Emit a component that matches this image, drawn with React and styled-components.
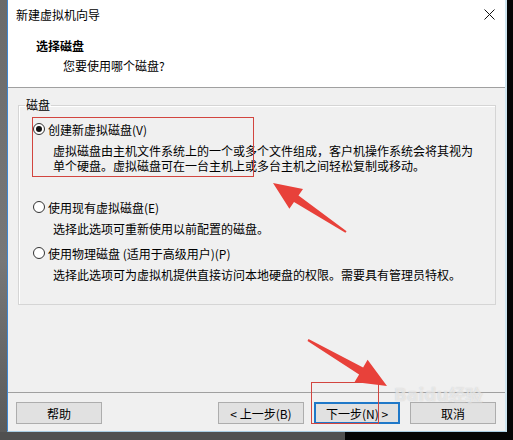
import React from "react";
import styled, { createGlobalStyle } from "styled-components";

const GlobalStyle = createGlobalStyle`
  html, body {
    margin: 0;
    padding: 0;
    overflow: hidden;
  }
  body {
    font-family: "Noto Sans CJK SC", "Noto Sans", sans-serif;
    font-size: 12px;
    color: #000;
  }
`;

const options = [
  {
    label: "创建新虚拟磁盘(V)",
    checked: true,
    desc: [
      "虚拟磁盘由主机文件系统上的一个或多个文件组成，客户机操作系统会将其视为",
      "单个硬盘。虚拟磁盘可在一台主机上或多台主机之间轻松复制或移动。",
    ],
    space: 27,
  },
  {
    label: "使用现有虚拟磁盘(E)",
    desc: ["选择此选项可重新使用以前配置的磁盘。"],
    space: 10,
  },
  {
    label: "使用物理磁盘 (适用于高级用户)(P)",
    desc: ["选择此选项可为虚拟机提供直接访问本地硬盘的权限。需要具有管理员特权。"],
    space: 0,
  },
];

function App() {
  return (
    <Screen>
      <GlobalStyle />
      <Row>
        <LeftEdge />
        <Window>
          <TitleBar>
            <span>新建虚拟机向导</span>
            <svg width="11" height="11" viewBox="0 0 11 11">
              <path d="M0.5 0.5 L10.5 10.5 M10.5 0.5 L0.5 10.5" stroke="#111" strokeWidth="1" />
            </svg>
          </TitleBar>
          <Header>
            <Heading>选择磁盘</Heading>
            <SubHeading>您要使用哪个磁盘?</SubHeading>
          </Header>
          <Body>
            <Group>
              <GroupLabel>磁盘</GroupLabel>
              <OptionList>
                {options.map((o) => (
                  <Option key={o.label} $space={o.space}>
                    <RadioRow>
                      <Radio $checked={o.checked} />
                      <span>{o.label}</span>
                    </RadioRow>
                    <Desc>
                      {o.desc.map((d) => (
                        <DescLine key={d}>{d}</DescLine>
                      ))}
                    </Desc>
                  </Option>
                ))}
              </OptionList>
            </Group>
          </Body>
          <Footer>
            <Button>帮助</Button>
            <ButtonGroup>
              <Button>&lt; 上一步(B)</Button>
              <Button $primary>下一步(N) &gt;</Button>
              <Button>取消</Button>
            </ButtonGroup>
          </Footer>
        </Window>
        <RightEdge />
      </Row>
      <BottomRow>
        <BottomGray />
      </BottomRow>

      <Watermark>Baidu经验</Watermark>

      <Annotations width="513" height="440" viewBox="0 0 513 440">
        <rect x="32.5" y="117.5" width="221" height="59" fill="none" stroke="#d2453f" strokeWidth="1" />
        <rect x="311.5" y="382.5" width="67" height="41" fill="none" stroke="#d2453f" strokeWidth="1" />
        <polygon
          fill="#e8413a"
          points="273,183 303,189 298.5,195.5 346.6,231.2 345.4,232.8 294,202.1 289.4,208.7"
        />
        <polygon
          fill="#e8413a"
          points="387,386 367.6,359.7 363.1,367.4 308.5,339.1 307.5,340.9 359.1,374.4 354.6,382.1"
        />
      </Annotations>
    </Screen>
  );
}

export default App;

const Screen = styled.div`
  position: relative;
  width: 513px;
  height: 440px;
  display: flex;
  flex-direction: column;
  background: #0b0b0b;
`;

const Row = styled.div`
  display: flex;
  height: 432px;
`;

const LeftEdge = styled.div`
  width: 7px;
  background: linear-gradient(#6a6a6a, #777 60%, #5a5a5a);
`;

const Window = styled.div`
  box-sizing: border-box;
  width: 500px;
  display: flex;
  flex-direction: column;
  border-left: 1px solid #3f86cf;
  border-right: 2px solid #cfe6f1;
  border-bottom: 1px solid #a9cde3;
  background: #f0f0f0;
`;

const RightEdge = styled.div`
  flex: 1;
  background: #050505;
`;

const BottomRow = styled.div`
  display: flex;
  height: 8px;
  background: #050505;
`;

const BottomGray = styled.div`
  width: 345px;
  background: #505050;
`;

const TitleBar = styled.div`
  height: 28px;
  display: flex;
  align-items: center;
  justify-content: space-between;
  padding: 1px 10px 0 8px;
  box-sizing: border-box;
  background: #fff;
  font-size: 12px;
`;

const Header = styled.div`
  height: 60px;
  box-sizing: border-box;
  padding: 10px 0 0 28px;
  background: #fff;
  border-bottom: 1px solid #a0a0a0;
`;

const Heading = styled.div`
  font-weight: bold;
  line-height: 16px;
`;

const SubHeading = styled.div`
  line-height: 16px;
  margin-top: 4px;
  padding-left: 27px;
`;

const Body = styled.div`
  flex: 1;
  padding: 10px 9px 0 10px;
`;

const Group = styled.fieldset`
  box-sizing: border-box;
  height: 207px;
  margin: 0;
  padding: 0;
  border: 1px solid #d5d5d5;
  box-shadow: inset 1px 1px 0 #fff;
`;

const GroupLabel = styled.legend`
  margin-left: 6px;
  padding: 0 1px;
  line-height: 14px;
`;

const OptionList = styled.div`
  padding: 10px 0 0 14px;
`;

const Option = styled.div`
  margin-bottom: ${(p) => p.$space}px;
`;

const RadioRow = styled.div`
  display: flex;
  align-items: center;
  gap: 3px;
  height: 14px;
`;

const Radio = styled.span`
  box-sizing: border-box;
  width: 12px;
  height: 12px;
  border-radius: 50%;
  border: 1px solid #333;
  background: #fff;
  display: flex;
  align-items: center;
  justify-content: center;

  &::after {
    content: "";
    width: 6px;
    height: 6px;
    border-radius: 50%;
    background: #111;
    display: ${(p) => (p.$checked ? "block" : "none")};
  }
`;

const Desc = styled.div`
  margin-top: 7px;
  padding-left: 20px;
`;

const DescLine = styled.div`
  height: 15px;
  line-height: 15px;
  white-space: nowrap;
`;

const Footer = styled.div`
  display: flex;
  align-items: flex-start;
  height: 39px;
  box-sizing: border-box;
  padding: 9px 9px 0 8px;
  border-top: 1px solid #a0a0a0;
`;

const ButtonGroup = styled.div`
  display: flex;
  gap: 10px;
  margin-left: auto;
`;

const Button = styled.button`
  box-sizing: border-box;
  width: 86px;
  height: 22px;
  padding: 0;
  font-family: inherit;
  font-size: 12px;
  color: #000;
  background: #e1e1e1;
  border: ${(p) => (p.$primary ? "2px solid #1f78c8" : "1px solid #adadad")};
`;

const Watermark = styled.div`
  position: absolute;
  left: 394px;
  top: 386px;
  font-family: "DejaVu Sans", sans-serif;
  font-size: 17px;
  line-height: 18px;
  font-weight: bold;
  color: rgba(255, 255, 255, 0.55);
  text-shadow: 0 0 1px rgba(160, 160, 160, 0.5);
  pointer-events: none;
`;

const Annotations = styled.svg`
  position: absolute;
  left: 0;
  top: 0;
  pointer-events: none;
`;
